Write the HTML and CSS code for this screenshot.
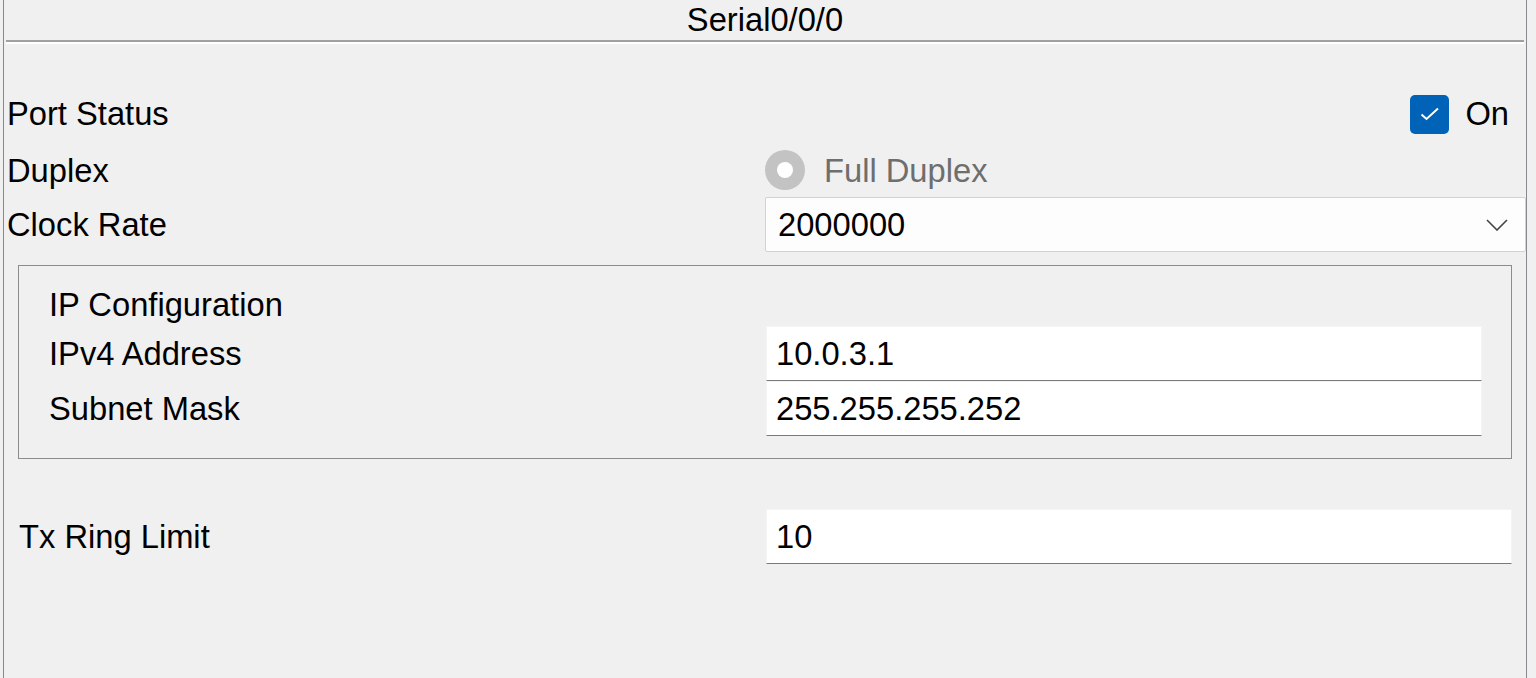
FILE: index.html
```html
<!DOCTYPE html>
<html>
<head>
<meta charset="utf-8">
<link rel="stylesheet" href="styles.css">
</head>
<body>
<div class="panel">
  <div class="title">Serial0/0/0</div>
  <div class="sep"></div>

  <div class="row row-port">
    <span class="lbl">Port Status</span>
    <span class="check">
      <span class="box"><svg width="20" height="14" viewBox="0 0 20 14"><path d="M1.5 7.5 L6.5 12 L18 1.5" fill="none" stroke="#fff" stroke-width="2"/></svg></span>
      <span class="on">On</span>
    </span>
  </div>

  <div class="row row-duplex">
    <span class="lbl">Duplex</span>
    <span class="radio"><span class="dot"></span></span>
    <span class="radio-text">Full Duplex</span>
  </div>

  <div class="row row-clock">
    <span class="lbl">Clock Rate</span>
    <div class="select">
      <span>2000000</span>
      <svg class="chev" width="22" height="12" viewBox="0 0 22 12"><path d="M1 1 L11 11 L21 1" fill="none" stroke="#444" stroke-width="1.6"/></svg>
    </div>
  </div>

  <div class="group">
    <div class="group-title">IP Configuration</div>
    <div class="grow">
      <span class="glbl">IPv4 Address</span>
      <div class="input">10.0.3.1</div>
    </div>
    <div class="grow">
      <span class="glbl">Subnet Mask</span>
      <div class="input">255.255.255.252</div>
    </div>
  </div>

  <div class="row row-tx">
    <span class="txlbl">Tx Ring Limit</span>
    <div class="input tx-input">10</div>
  </div>
</div>
</body>
</html>
```

FILE: styles.css
```css
html, body {
  margin: 0;
  padding: 0;
  background: #f0f0f0;
}
body {
  font-family: "Liberation Sans", Arial, sans-serif;
  font-size: 32.7px;
  color: #000;
}
.panel {
  margin-left: 3px;
  width: 1522px;
  height: 678px;
  border-left: 1px solid #868a8e;
  border-right: 1px solid #868a8e;
  box-sizing: content-box;
  overflow: hidden;
}
.title {
  height: 40px;
  line-height: 40px;
  text-align: center;
}
.sep {
  margin: 0 2px;
  height: 2px;
  background: #a0a0a0;
  border-bottom: 2px solid #ffffff;
}
.row {
  display: flex;
  align-items: center;
}
.lbl {
  flex: 0 0 758px;
  padding-left: 3px;
}
.row-port {
  margin-top: 42px;
  height: 56px;
}
.check {
  margin-left: auto;
  display: flex;
  align-items: center;
  padding-right: 17px;
}
.box {
  width: 39px;
  height: 39px;
  border-radius: 5px;
  background: #0063b8;
  display: flex;
  align-items: center;
  justify-content: center;
}
.on {
  margin-left: 16px;
}
.row-duplex {
  height: 55px;
}
.radio {
  width: 40px;
  height: 40px;
  border-radius: 50%;
  background: #c3c3c3;
  display: flex;
  align-items: center;
  justify-content: center;
}
.dot {
  width: 16px;
  height: 16px;
  border-radius: 50%;
  background: #fff;
}
.radio-text {
  margin-left: 19px;
  color: #6e6e6e;
  padding-top: 3px;
}
.row-duplex .lbl {
  padding-top: 3px;
}
.row-clock {
  height: 55px;
}
.select {
  flex: 1;
  height: 55px;
  box-sizing: border-box;
  border: 1px solid #d2d2d2;
  border-radius: 2px;
  background: #fdfdfd;
  display: flex;
  align-items: center;
  padding-left: 12px;
  padding-right: 17px;
}
.chev {
  margin-left: auto;
}
.group {
  margin: 13px 14px 0 14px;
  border: 1px solid #8c8c8c;
  padding: 19px 29px 22px 30px;
}
.group-title {
  height: 40px;
  line-height: 40px;
  margin-bottom: 1px;
}
.grow {
  display: flex;
  align-items: center;
  height: 55px;
}
.glbl {
  flex: 0 0 717px;
}
.input {
  flex: 1;
  height: 55px;
  box-sizing: border-box;
  background: #fff;
  border: 1px solid #f4f4f4;
  border-bottom: 1px solid #7a7a7a;
  padding-left: 9px;
  display: flex;
  align-items: center;
}
.row-tx {
  margin-top: 50px;
  height: 55px;
}
.txlbl {
  flex: 0 0 747px;
  padding-left: 15px;
}
.tx-input {
  margin-right: 14px;
}
```
